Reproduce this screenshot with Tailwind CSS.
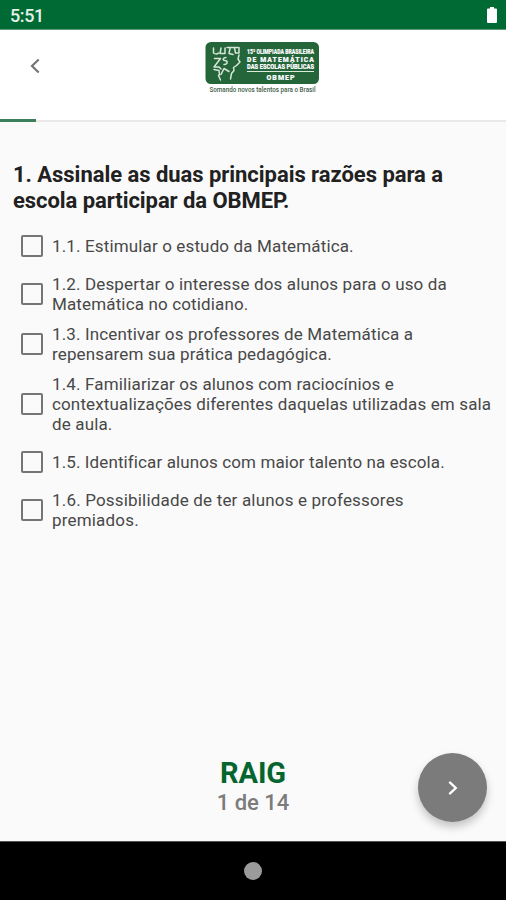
<!DOCTYPE html>
<html lang="pt-BR">
<head>
<meta charset="utf-8">
<title>OBMEP</title>
<script src="https://cdn.jsdelivr.net/npm/@tailwindcss/browser@4"></script>
</head>
<body class="w-[506px] h-[900px] overflow-hidden bg-[#fafafa] font-['Roboto',sans-serif] flex flex-col">
  <div class="h-[30px] shrink-0 bg-[#006a35] border-b border-[#5f9c7b] flex items-center justify-between pl-[10px] pr-[8px] pt-[2px]">
    <span class="text-[18px] leading-none font-medium text-[#e4f2e8] tracking-[-0.4px]">5:51</span>
    <svg class="w-[12px] h-[18px]" viewBox="0 0 12 18"><path d="M4 0h4v1.500h2Q11 1.500 11 2.500V15q0 1-1 1H2q-1 0-1-1V2.500Q1 1.500 2 1.500h2z" fill="#fff"/></svg>
  </div>
  <header class="h-[92px] shrink-0 bg-white border-b-2 border-[#e9e9e9] flex relative">
    <svg class="w-[12px] h-[16px] ml-[29px] mt-[28px]" viewBox="0 0 12 16"><path d="M9.700 1.500 3 8l6.700 6.500" fill="none" stroke="#757575" stroke-width="2.200"/></svg>
    <svg class="w-[120px] h-[56px] ml-[161px] mt-[10px] overflow-visible" viewBox="0 0 120 56">
      <rect x="3.500" y="2" width="113.500" height="42" rx="5.500" fill="#25653a"/>
      <g fill="none" stroke="#d7e6d9" stroke-width="1.500" stroke-linejoin="round" stroke-linecap="round">
        <path d="M11.500 8v5q3 2 5 0M19 8l-1 5.500h5V8M25 7.500h11M28 8.500l-1 5 4 1M32.500 8l1 5h3.500V7.500M12.500 18.500h6l-6.500 8.500h5l2 2M12 29.500l5 1 .5 4-1 1 2 4.500M24 17.500c-3 0-4 3-1 3s3 4-1 4M37 15l-1 4 2 3-3.500 3.500-3 2 .5 3-2.500 3-1 5.500M19 34.500l3-6 5 3"/>
      </g>
      <g fill="#fff" stroke="#fff" stroke-width=".15" font-family="Roboto, sans-serif" font-weight="900" font-size="7">
        <text x="45" y="14.200" textLength="67" lengthAdjust="spacingAndGlyphs">15ª OLIMPIADA BRASILEIRA</text>
        <text x="45" y="21.500" textLength="67" font-size="6.800">DE MATEMÁTICA</text>
        <text x="45" y="28.700" textLength="67" lengthAdjust="spacingAndGlyphs">DAS ESCOLAS PÚBLICAS</text>
        <text x="64.500" y="39.500" textLength="28">OBMEP</text>
      </g>
      <path d="M45 31.500h67" stroke="#dcebdd"/>
      <text x="7.500" y="52" textLength="106" lengthAdjust="spacingAndGlyphs" font-family="Roboto, sans-serif" font-size="6.600" font-weight="500" fill="#3f6048">Somando novos talentos para o Brasil</text>
    </svg>
    <div class="absolute left-0 top-[89px] w-[36px] h-[3px] bg-[#3d7f5a]"></div>
  </header>
  <main class="grow flex flex-col">
    <h1 class="mt-[40px] ml-[13px] h-[61px] text-[22px] leading-[26px] font-bold text-[#212121] whitespace-nowrap"><span class="tracking-[-0.04px]">1. Assinale as duas principais razões para a</span><br><span class="tracking-[-0.06px]">escola participar da OBMEP.</span></h1>
    <div class="flex flex-col text-[17px] leading-[20px] text-[#484848] tracking-[0.14px] whitespace-nowrap">
      <label class="h-[46px] flex items-center pl-[21px] gap-[9px]"><span class="size-[22px] shrink-0 rounded-[2px] border-2 border-[#757575]"></span><span>1.1. Estimular o estudo da Matemática.</span></label>
      <label class="h-[50px] flex items-center pl-[21px] gap-[9px]"><span class="size-[22px] shrink-0 rounded-[2px] border-2 border-[#757575]"></span><span>1.2. Despertar o interesse dos alunos para o uso da<br>Matemática no cotidiano.</span></label>
      <label class="h-[50px] flex items-center pl-[21px] gap-[9px]"><span class="size-[22px] shrink-0 rounded-[2px] border-2 border-[#757575]"></span><span>1.3. Incentivar os professores de Matemática a<br>repensarem sua prática pedagógica.</span></label>
      <label class="h-[70px] flex items-center pl-[21px] gap-[9px]"><span class="size-[22px] shrink-0 rounded-[2px] border-2 border-[#757575]"></span><span>1.4. Familiarizar os alunos com raciocínios e<br>contextualizações diferentes daquelas utilizadas em sala<br>de aula.</span></label>
      <label class="h-[46px] flex items-center pl-[21px] gap-[9px]"><span class="size-[22px] shrink-0 rounded-[2px] border-2 border-[#757575]"></span><span class="tracking-[0.11px]">1.5. Identificar alunos com maior talento na escola.</span></label>
      <label class="h-[50px] flex items-center pl-[21px] gap-[9px]"><span class="size-[22px] shrink-0 rounded-[2px] border-2 border-[#757575]"></span><span class="tracking-[0.18px]">1.6. Possibilidade de ter alunos e professores<br>premiados.</span></label>
    </div>
  </main>
  <footer class="h-[88px] shrink-0 grid grid-cols-[1fr_auto_1fr] items-start">
    <div class="col-start-2 pt-[3px] text-center whitespace-nowrap">
      <div class="text-[29px] leading-[34px] font-bold text-[#04652e] tracking-[-0.1px]">RAIG</div>
      <div class="text-[22px] leading-[26px] font-medium text-[#7b7b7b]">1 de 14</div>
    </div>
    <button class="justify-self-end mr-[19px] size-[69px] rounded-full bg-[#7b7b7b] flex items-center justify-center shadow-[0_5px_8px_rgba(0,0,0,0.22)]">
      <svg class="w-[12px] h-[16px]" viewBox="0 0 12 16"><path d="m2.300 1.800 6.500 6.200-6.500 6.200" fill="none" stroke="#fff" stroke-width="2.300"/></svg>
    </button>
  </footer>
  <nav class="h-[59px] shrink-0 bg-black border-t border-[#555] flex items-center justify-center">
    <span class="size-[18px] rounded-full bg-[#9b9b9b]"></span>
  </nav>
</body>
</html>
